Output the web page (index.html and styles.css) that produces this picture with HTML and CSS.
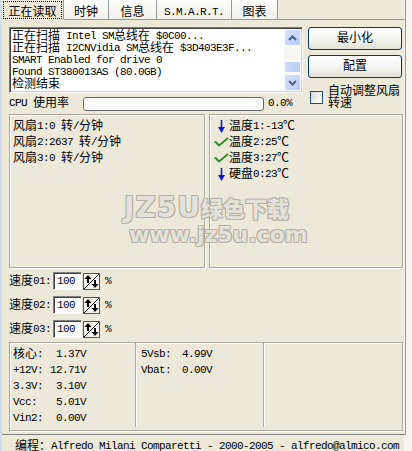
FILE: index.html
```html
<!DOCTYPE html>
<html lang="zh-CN">
<head>
    <meta charset="UTF-8">
    <meta name="viewport" content="width=device-width, initial-scale=1.0">
    <title>SpeedFan</title>
    <link rel="stylesheet" href="styles.css">
</head>
<body>

<div class="tabs">
    <div class="tab tab-read active"><span class="focus"><span class="zh">正在读取</span></span></div>
    <div class="tab tab-clock"><span class="zh">时钟</span></div>
    <div class="tab tab-info"><span class="zh">信息</span></div>
    <div class="tab tab-smart">S.M.A.R.T.</div>
    <div class="tab tab-chart"><span class="zh">图表</span></div>
</div>

<div class="panel">
    <div class="top">
        <div class="main-col">
            <div class="log">
                <div class="log-lines">
                    <div><span class="zh">正在扫描</span> Intel SM<span class="zh">总线在</span> $0C00...</div>
                    <div><span class="zh">正在扫描</span> I2CNVidia SM<span class="zh">总线在</span> $3D403E3F...</div>
                    <div>SMART Enabled for drive 0</div>
                    <div>Found ST380013AS (80.0GB)</div>
                    <div><span class="zh">检测结束</span></div>
                </div>
                <div class="scrollbar">
                    <div class="sb-btn">
                        <svg width="9" height="6" viewBox="0 0 9 6"><path d="M1 5 L4.5 1.5 L8 5" fill="none" stroke="#4d6185" stroke-width="2"/></svg>
                    </div>
                    <div class="sb-track"><div class="sb-thumb"></div></div>
                    <div class="sb-btn">
                        <svg width="9" height="6" viewBox="0 0 9 6"><path d="M1 1 L4.5 4.5 L8 1" fill="none" stroke="#4d6185" stroke-width="2"/></svg>
                    </div>
                </div>
            </div>
            <div class="cpu">
                <span class="cpu-label">CPU <span class="zh">使用率</span></span>
                <div class="progress"></div>
                <span>0.0%</span>
            </div>
        </div>
        <div class="side-col">
            <button class="btn"><span class="zh">最小化</span></button>
            <button class="btn btn-second"><span class="zh">配置</span></button>
            <div class="auto-fan">
                <span class="checkbox"></span>
                <span class="fan-text"><span class="zh">自动调整风扇</span><br><span class="zh">转速</span></span>
            </div>
        </div>
    </div>

    <div class="sensors">
        <div class="group fans">
            <div><span class="zh">风扇</span>1:0 <span class="zh">转</span>/<span class="zh">分钟</span></div>
            <div><span class="zh">风扇</span>2:2637 <span class="zh">转</span>/<span class="zh">分钟</span></div>
            <div><span class="zh">风扇</span>3:0 <span class="zh">转</span>/<span class="zh">分钟</span></div>
        </div>
        <div class="group temps">
            <div class="temp-row">
                <span class="ico"><svg width="7" height="13" viewBox="0 0 7 13"><path d="M3.5 0 V9" stroke="#1018d8" stroke-width="1.6"/><path d="M0 7 H7 L3.5 13 Z" fill="#1018d8"/></svg></span>
                <span><span class="zh">温度</span>1:-13<span class="zh">℃</span></span>
            </div>
            <div class="temp-row">
                <span class="ico"><svg width="15" height="10" viewBox="0 0 15 10"><path d="M1 4.5 L5 8.5 L14 1" fill="none" stroke="#2a8c2a" stroke-width="2"/></svg></span>
                <span><span class="zh">温度</span>2:25<span class="zh">℃</span></span>
            </div>
            <div class="temp-row">
                <span class="ico"><svg width="15" height="10" viewBox="0 0 15 10"><path d="M1 4.5 L5 8.5 L14 1" fill="none" stroke="#2a8c2a" stroke-width="2"/></svg></span>
                <span><span class="zh">温度</span>3:27<span class="zh">℃</span></span>
            </div>
            <div class="temp-row">
                <span class="ico"><svg width="7" height="13" viewBox="0 0 7 13"><path d="M3.5 0 V9" stroke="#1018d8" stroke-width="1.6"/><path d="M0 7 H7 L3.5 13 Z" fill="#1018d8"/></svg></span>
                <span><span class="zh">硬盘</span>0:23<span class="zh">℃</span></span>
            </div>
        </div>
    </div>

    <div class="speeds">
        <div class="speed-row">
            <span class="speed-label"><span class="zh">速度</span>01:</span>
            <span class="num">100</span>
            <svg class="spin" width="17" height="17" viewBox="0 0 17 17"><rect x="0.5" y="0.5" width="16" height="16" fill="#f4f3ee" stroke="#555"/><path d="M1 16 L16 1" stroke="#000"/><path d="M5 2 L1.5 6 H4 V10 H6 V6 H8.5 Z" fill="#000"/><path d="M12 15 L8.5 11 H11 V7 H13 V11 H15.5 Z" fill="#000"/></svg>
            <span class="pct">%</span>
        </div>
        <div class="speed-row">
            <span class="speed-label"><span class="zh">速度</span>02:</span>
            <span class="num">100</span>
            <svg class="spin" width="17" height="17" viewBox="0 0 17 17"><rect x="0.5" y="0.5" width="16" height="16" fill="#f4f3ee" stroke="#555"/><path d="M1 16 L16 1" stroke="#000"/><path d="M5 2 L1.5 6 H4 V10 H6 V6 H8.5 Z" fill="#000"/><path d="M12 15 L8.5 11 H11 V7 H13 V11 H15.5 Z" fill="#000"/></svg>
            <span class="pct">%</span>
        </div>
        <div class="speed-row">
            <span class="speed-label"><span class="zh">速度</span>03:</span>
            <span class="num">100</span>
            <svg class="spin" width="17" height="17" viewBox="0 0 17 17"><rect x="0.5" y="0.5" width="16" height="16" fill="#f4f3ee" stroke="#555"/><path d="M1 16 L16 1" stroke="#000"/><path d="M5 2 L1.5 6 H4 V10 H6 V6 H8.5 Z" fill="#000"/><path d="M12 15 L8.5 11 H11 V7 H13 V11 H15.5 Z" fill="#000"/></svg>
            <span class="pct">%</span>
        </div>
    </div>

    <div class="group volts">
        <div class="vcol vcol-1">
            <div class="vrow"><span><span class="zh">核心</span>:</span><span>1.37V</span></div>
            <div class="vrow"><span>+12V:</span><span>12.71V</span></div>
            <div class="vrow"><span>3.3V:</span><span>3.10V</span></div>
            <div class="vrow"><span>Vcc:</span><span>5.01V</span></div>
            <div class="vrow"><span>Vin2:</span><span>0.00V</span></div>
        </div>
        <div class="vcol vcol-2">
            <div class="vrow"><span>5Vsb:</span><span>4.99V</span></div>
            <div class="vrow"><span>Vbat:</span><span>0.00V</span></div>
        </div>
        <div class="vcol vcol-3"></div>
    </div>
</div>

<div class="status"><span class="zh">编程：</span>Alfredo Milani Comparetti - 2000-2005 - alfredo@almico.com</div>

<div class="watermark">
    <div class="wm-big">JZ5U<span class="wm-zh">绿色下载</span></div>
    <div class="wm-url">www.jz5u.com</div>
</div>

</body>
</html>
```

FILE: styles.css
```css
body {
    margin: 0;
    width: 410px;
    height: 451px;
    border-left: 2px solid #d4def1;
    background: linear-gradient(to right, #ece9d8 404px, #f6f5ef 404px);
    font-family: "Liberation Mono", "DejaVu Sans Mono", monospace;
    font-size: 11px;
    letter-spacing: -0.6px;
    line-height: 12px;
    color: #000;
    position: relative;
    overflow: hidden;
}
.zh {
    font-family: "Noto Sans CJK SC", sans-serif;
    font-size: 12px;
    letter-spacing: 0;
    line-height: 0;
    vertical-align: -1px;
}

/* tabs */
.tabs {
    display: flex;
    width: 404px;
    height: 20px;
}
.tab {
    box-sizing: border-box;
    height: 20px;
    padding-top: 4px;
    line-height: 16px;
    text-align: center;
    border-right: 1px solid #919b9c;
    border-bottom: 1px solid #919b9c;
    background: linear-gradient(#fdfdfc, #f1f0ea);
}
.tab.active {
    padding-top: 1px;
    background: #ece9d8;
    border-bottom-color: #ece9d8;
}
.tabs::after {
    content: "";
    flex: 1;
    border-bottom: 1px solid #919b9c;
    border-right: 1px solid #919b9c;
}
.focus {
    display: block;
    box-sizing: border-box;
    margin: 0 1px;
    height: 18px;
    padding-top: 2px;
    line-height: 16px;
    border: 1px dotted #000;
}
.tab-read { width: 62px; }
.tab-clock { width: 45px; }
.tab-info { width: 48px; }
.tab-smart { width: 75px; }
.tab-chart { width: 46px; }

/* panel */
.panel {
    width: 394px;
    padding: 7px 2px 3px 7px;
    border-right: 1px solid #919b9c;
    border-bottom: 1px solid #808080;
}
.top {
    display: flex;
    gap: 5px;
}
.main-col {
    width: 294px;
}
.log {
    display: flex;
    box-sizing: border-box;
    height: 66px;
    padding: 1px;
    border: 1px solid;
    border-color: #7a7a7a #fff #fff #7a7a7a;
    box-shadow: inset 1px 1px #404040, inset -1px -1px #d4d0c8;
    background: #fff;
}
.log-lines {
    flex: 1;
    padding: 1px 0 0 1px;
    overflow: hidden;
    white-space: nowrap;
}
.scrollbar {
    width: 17px;
    display: flex;
    flex-direction: column;
    background: #f7f7f4;
}
.sb-btn {
    box-sizing: border-box;
    height: 17px;
    display: flex;
    align-items: center;
    justify-content: center;
    border: 1px solid #fff;
    border-radius: 2px;
    background: linear-gradient(135deg, #d7e2fd, #b9cbf5);
}
.sb-track {
    flex: 1;
    display: flex;
    flex-direction: column;
    justify-content: flex-end;
    padding-bottom: 1px;
}
.sb-thumb {
    height: 10px;
    border: 1px solid #fff;
    border-radius: 2px;
    background: linear-gradient(to right, #cad8fb, #b8ccf6);
}
.cpu {
    display: flex;
    align-items: center;
    height: 15px;
    margin-top: 3px;
    line-height: 17px;
}
.cpu-label {
    width: 74px;
}
.progress {
    box-sizing: border-box;
    width: 181px;
    height: 14px;
    margin-right: 4px;
    border: 1px solid #686868;
    border-radius: 3px;
    background: #fff;
}

/* buttons column */
.side-col {
    width: 95px;
}
.btn {
    display: block;
    box-sizing: border-box;
    width: 94px;
    height: 23px;
    padding: 0;
    border: 1px solid #003c74;
    border-radius: 3px;
    background: linear-gradient(#ffffff, #f4f4f0 55%, #e3e1d7);
    font: inherit;
    line-height: 21px;
    color: #000;
}
.btn-second {
    margin-top: 5px;
}
.auto-fan {
    display: flex;
    align-items: center;
    gap: 5px;
    margin-top: 7px;
}
.fan-text {
    line-height: 12px;
}
.checkbox {
    box-sizing: border-box;
    width: 13px;
    height: 13px;
    margin-left: 2px;
    border: 1px solid #1c5180;
    background: linear-gradient(135deg, #dcdcd7, #fff);
}

/* sensor groups */
.group {
    box-sizing: border-box;
    border: 1px solid #aca899;
    box-shadow: inset 1px 1px #fff, 1px 1px #fff;
}
.sensors {
    display: flex;
    gap: 4px;
    height: 154px;
    margin-top: 3px;
}
.fans {
    width: 196px;
    padding: 3px 0 0 3px;
    line-height: 16px;
}
.temps {
    width: 194px;
    padding: 3px 0 0 3px;
    line-height: 16px;
}
.temp-row {
    display: flex;
    align-items: center;
    height: 16px;
}
.ico {
    width: 16px;
    display: flex;
    justify-content: center;
}

/* fan speeds */
.speeds {
    display: flex;
    flex-direction: column;
    gap: 6px;
    margin-top: 4px;
}
.speed-row {
    display: flex;
    align-items: center;
    height: 18px;
    line-height: 18px;
}
.speed-label {
    width: 44px;
}
.num {
    box-sizing: border-box;
    width: 29px;
    height: 18px;
    padding-left: 3px;
    line-height: 16px;
    border: 1px solid;
    border-color: #808080 #fff #fff #808080;
    box-shadow: inset 1px 1px #404040;
    background: #fff;
}
.spin {
    margin-left: 1px;
}
.pct {
    margin-left: 5px;
}

/* voltages */
.volts {
    display: grid;
    grid-template-columns: 126px 128px 1fr;
    height: 89px;
    margin-top: 4px;
}
.vcol {
    padding-top: 3px;
    margin-bottom: 3px;
    line-height: 16px;
}
.vcol-1,
.vcol-2 {
    border-right: 1px solid #aca899;
    box-shadow: 1px 0 #fff;
}
.vrow {
    display: flex;
    justify-content: space-between;
}
.vcol-1 .vrow {
    width: 73px;
    padding-left: 3px;
}
.vcol-2 .vrow {
    width: 71px;
    padding-left: 5px;
}

/* footer */
.status {
    padding: 3px 0 0 13px;
    line-height: 16px;
    white-space: nowrap;
}

/* watermark over the page */
.watermark {
    position: absolute;
    left: 122px;
    top: 191px;
    color: #e4e1d8;
    font-family: "DejaVu Sans", sans-serif;
    font-weight: bold;
    letter-spacing: 0;
    text-shadow: -1px -1px 0 #b3b0a6, 1px -1px 0 #b3b0a6, -1px 1px 0 #b3b0a6, 1px 1px 0 #b3b0a6;
    pointer-events: none;
}
.wm-big {
    font-size: 28px;
    line-height: 32px;
    letter-spacing: 1px;
}
.wm-zh {
    font-family: "Noto Sans CJK SC", sans-serif;
    font-size: 22px;
    font-weight: 900;
    letter-spacing: 0;
}
.wm-url {
    margin-left: 5px;
    font-size: 22px;
    line-height: 22px;
}
```
